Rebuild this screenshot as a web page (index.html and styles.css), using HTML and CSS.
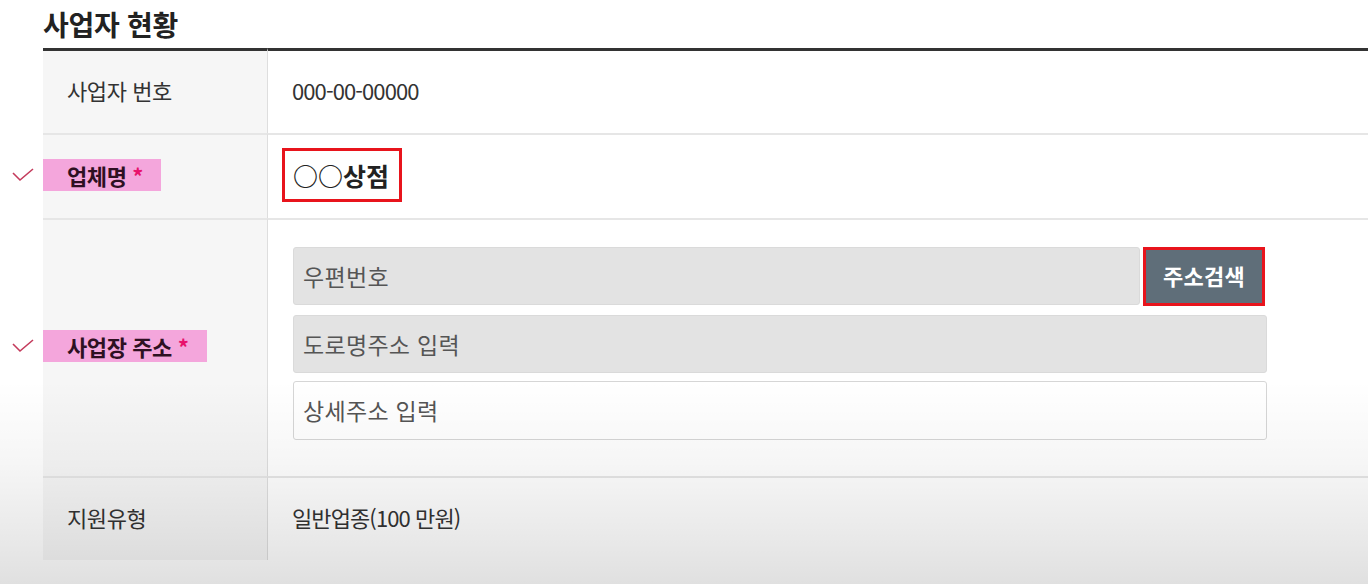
FILE: index.html
```html
<!DOCTYPE html>
<html lang="ko">
<head>
	<meta charset="utf-8">
	<title>사업자 현황</title>
	<link rel="stylesheet" href="styles.css">
</head>
<body>
	<div class="page">
		<h2 class="title">사업자 현황</h2>
		<div class="info">
			<div class="mark"></div>
			<div class="label">사업자 번호</div>
			<div class="value">000-00-00000</div>

			<div class="mark"><svg class="check" viewBox="0 0 22 14"><polyline points="1,5 8,12 21,1"/></svg></div>
			<div class="label"><span class="req">업체명 <b>*</b></span></div>
			<div class="value"><span class="boxed">○○상점</span></div>

			<div class="mark"><svg class="check" viewBox="0 0 22 14"><polyline points="1,5 8,12 21,1"/></svg></div>
			<div class="label"><span class="req">사업장 주소 <b>*</b></span></div>
			<div class="value addr">
				<div class="addr-line">
					<div class="field grey">우편번호</div>
					<div class="btn-wrap"><button class="btn">주소검색</button></div>
				</div>
				<div class="field grey full">도로명주소 입력</div>
				<div class="field full">상세주소 입력</div>
			</div>

			<div class="mark"></div>
			<div class="label">지원유형</div>
			<div class="value">일반업종(100 만원)</div>
		</div>
	</div>
	<div class="shade"></div>
</body>
</html>
```

FILE: styles.css
```css
html, body{margin:0; padding:0;}
body{background:#fff; color:#333; font-family:"Noto Sans CJK KR", "Noto Sans", sans-serif; height:584px; overflow:hidden; position:relative;}
.page{padding-top:3px;}
.title{margin:0 0 0 43px; height:45px; font-size:28px; font-weight:700; color:#222; line-height:42px; letter-spacing:-0.3px;}

.info{display:grid; grid-template-columns:43px 225px 1fr; grid-template-rows:85px 85px 258px 84px;}
.info .label, .info .value{border-top:2px solid #e6e6e6;}
.info .label:nth-child(2), .info .value:nth-child(3){border-top:3px solid #333;}
.mark{display:flex; align-items:center; justify-content:center; padding-bottom:2px;}
.check{width:22px; height:14px; margin-left:2px; fill:none; stroke:#c43b5c; stroke-width:1.6;}

.label{background:#f6f6f6; border-right:1px solid #dedede; display:flex; align-items:center; padding:0 0 4px 24px; font-size:22px; color:#333; letter-spacing:-0.4px;}
.value{display:flex; align-items:center; padding:0 0 4px 24px; font-size:22px; color:#333; letter-spacing:-0.9px;}

.req{background:#f4a6dc; margin-left:-24px; padding:0 18px 0 24px; height:32px; line-height:32px; font-weight:700; color:#2e1022;}
.req b{color:#e8126c; font-weight:700;}

.boxed{border:3px solid #e8141c; margin-left:-10px; padding:0 10px 0 8px; height:48px; line-height:48px; font-size:25px; font-weight:700; color:#222; letter-spacing:0;}

.addr{flex-direction:column; align-items:stretch; justify-content:flex-start; padding:27px 101px 0 25px;}
.addr-line{display:flex; gap:3px;}
.field{height:58px; box-sizing:border-box; border:1px solid #d6d6d6; border-radius:3px; background:#fff; padding-left:9px; line-height:56px; font-size:23px; color:#555; letter-spacing:0.3px;}
.field.grey{background:#e3e3e3; border-color:#dadada;}
.addr-line .field{flex:1;}
.field.full{margin-top:9px;}
.field.full + .field.full{margin-top:8px; height:59px;}
.btn-wrap{width:122px; height:59px; box-sizing:border-box; border:3px solid #e8141c; margin-right:2px;}
.btn{display:block; width:100%; height:100%; border:0; background:#5f6e79; color:#fff; font-family:inherit; font-size:22px; font-weight:700; padding:0 0 3px; letter-spacing:0.3px;}

.shade{position:absolute; left:0; right:0; top:380px; bottom:0; pointer-events:none; background:linear-gradient(to bottom, rgba(0,0,0,0) 0%, rgba(0,0,0,0.035) 40%, rgba(0,0,0,0.09) 80%, rgba(0,0,0,0.12) 100%);}
```
